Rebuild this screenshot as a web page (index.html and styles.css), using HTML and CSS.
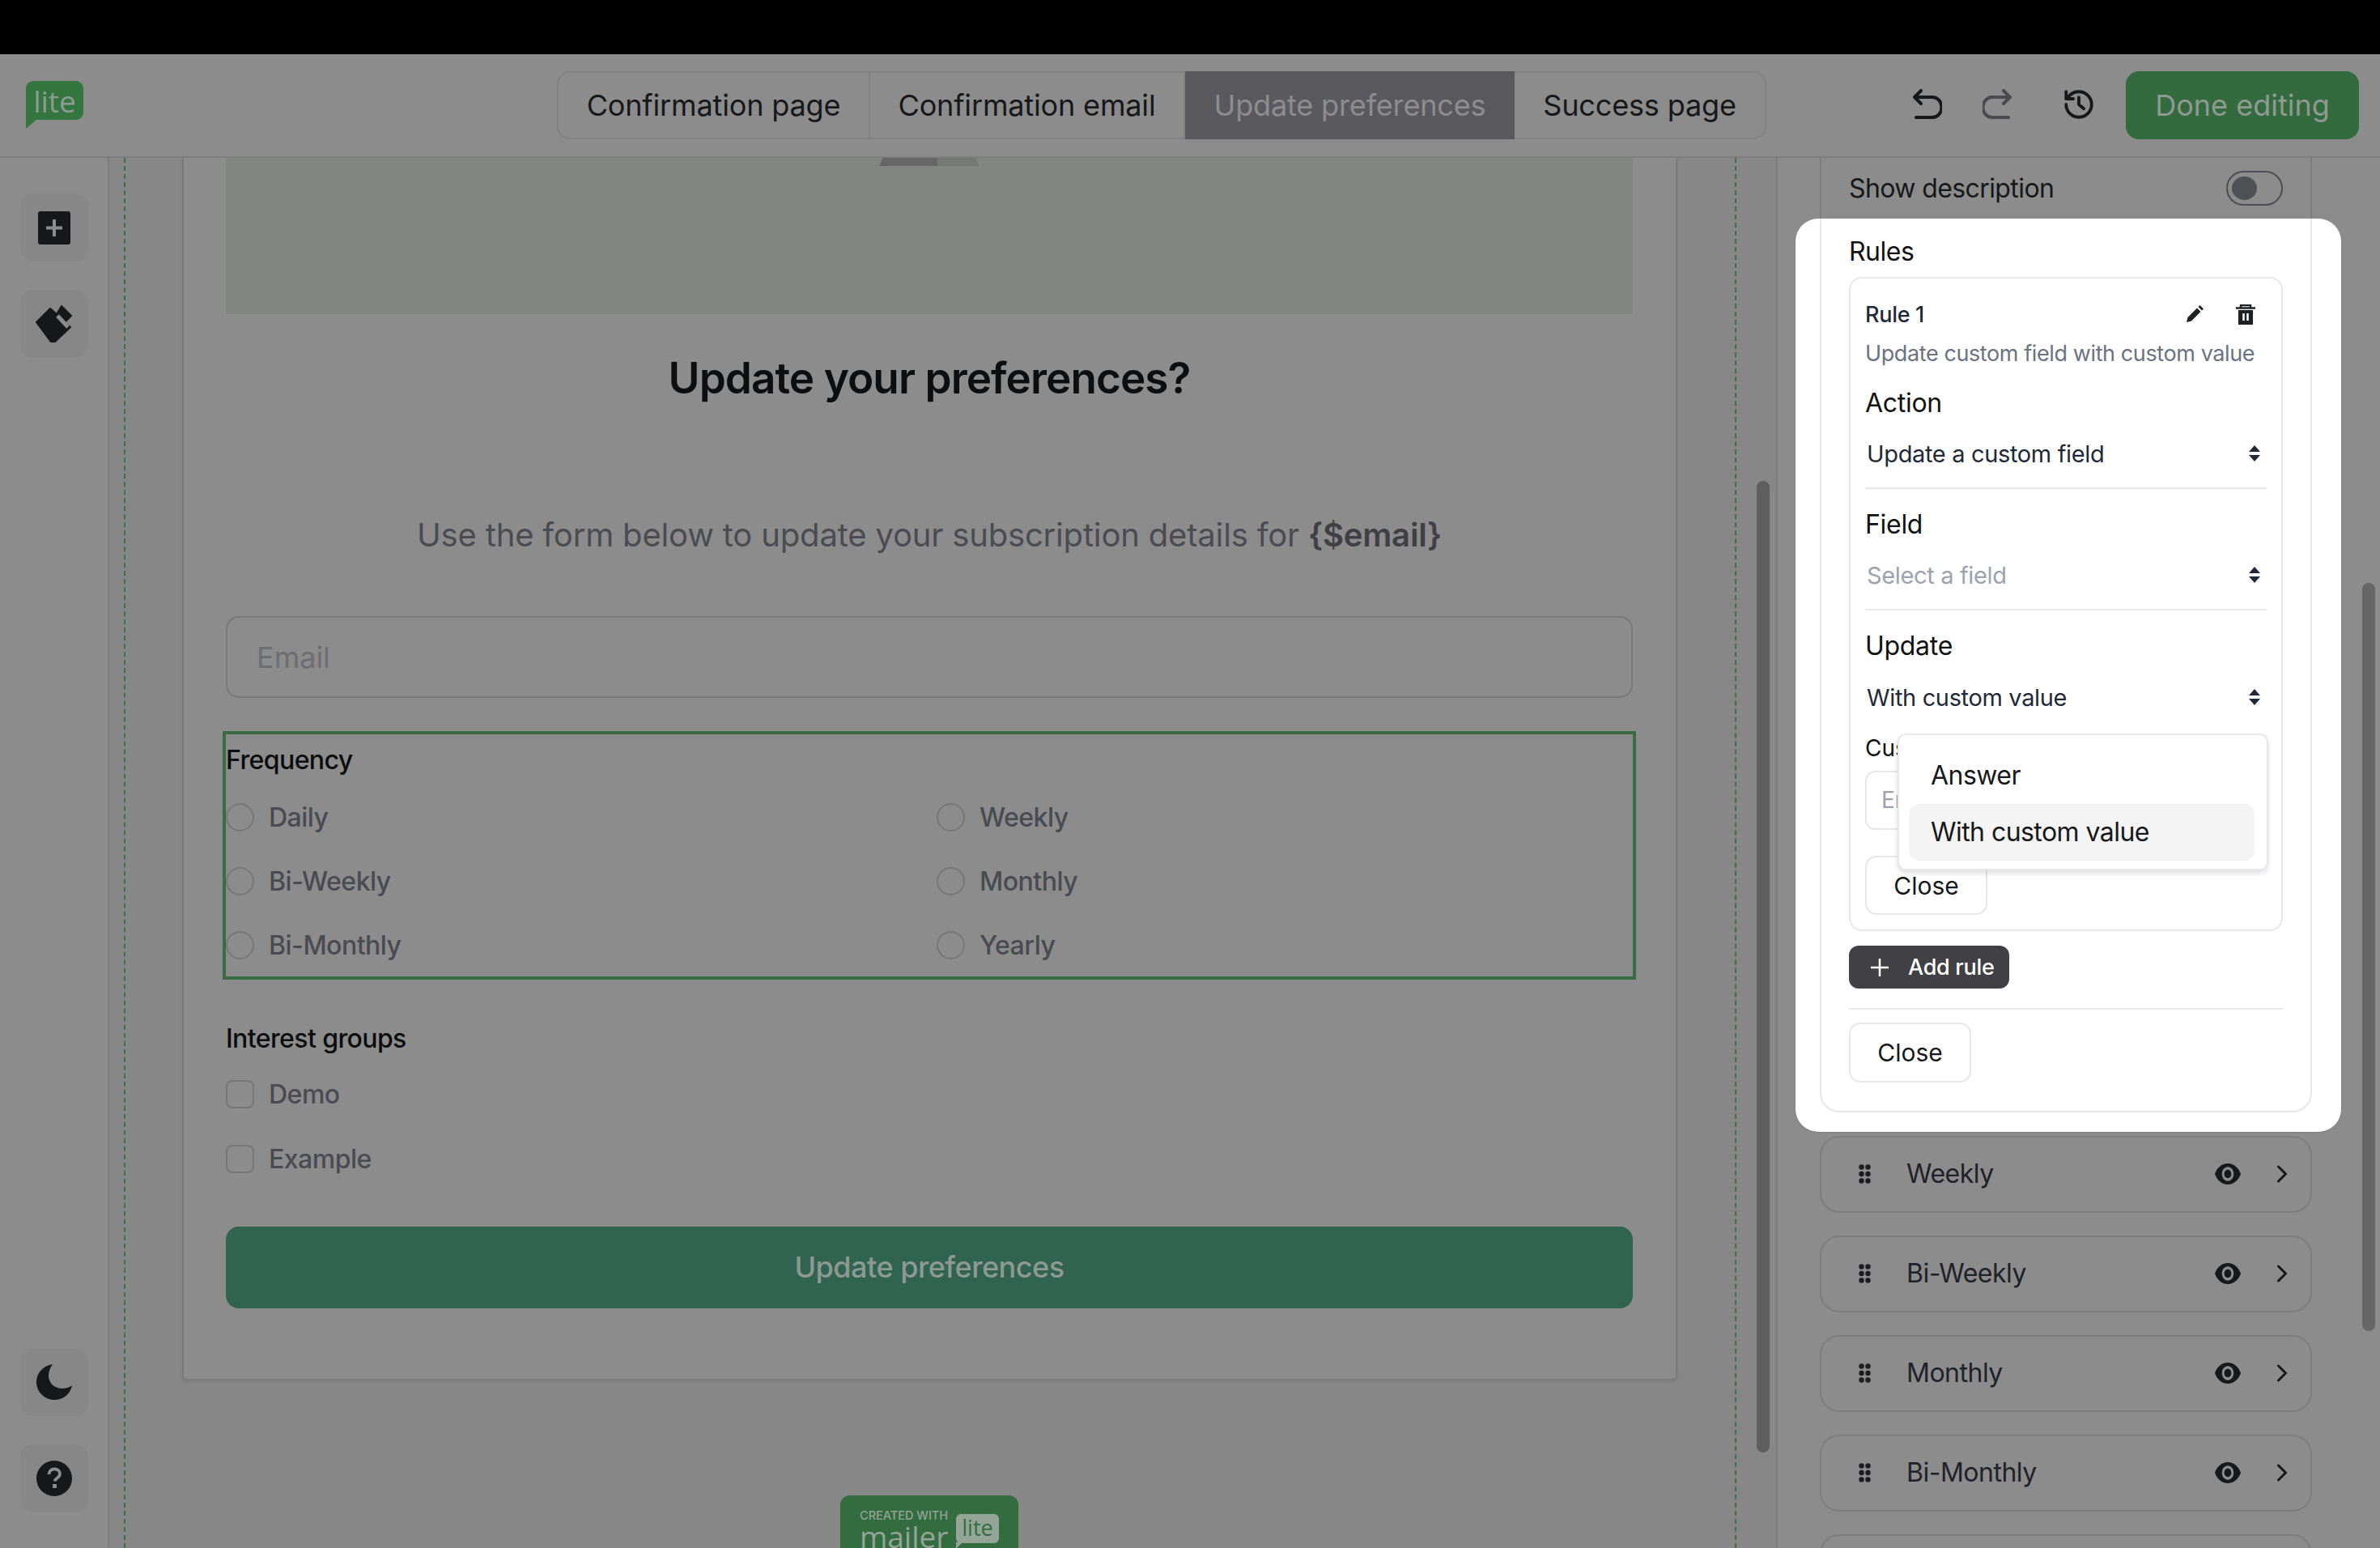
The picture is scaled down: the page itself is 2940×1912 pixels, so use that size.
FILE: index.html
```html
<!DOCTYPE html>
<html lang="en">
<head>
<meta charset="utf-8">
<title>Update preferences</title>
<link rel="stylesheet" href="styles.css">
</head>
<body>
<svg class="defs" width="0" height="0" aria-hidden="true">
  <symbol id="arrows" viewBox="0 0 14 20"><path d="M7 0l7 8H0zM7 20l-7-8h14z"/></symbol>
  <symbol id="eye" viewBox="1 4.500 22 15" preserveAspectRatio="none"><path fill-rule="evenodd" d="M12 4.500C7 4.500 2.730 7.610 1 12c1.730 4.390 6 7.500 11 7.500s9.270-3.110 11-7.500c-1.730-4.390-6-7.500-11-7.500zM12 17c-2.760 0-5-2.240-5-5s2.240-5 5-5 5 2.240 5 5-2.240 5-5 5zm0-8c-1.660 0-3 1.340-3 3s1.340 3 3 3 3-1.340 3-3-1.340-3-3-3z"/></symbol>
  <symbol id="drag" viewBox="0 0 15 24"><circle cx="3.500" cy="3.500" r="3.200"/><circle cx="11.500" cy="3.500" r="3.200"/><circle cx="3.500" cy="12" r="3.200"/><circle cx="11.500" cy="12" r="3.200"/><circle cx="3.500" cy="20.500" r="3.200"/><circle cx="11.500" cy="20.500" r="3.200"/></symbol>
  <symbol id="chev" viewBox="0 0 14 22"><path d="M2.500 2l9 9-9 9" fill="none" stroke="currentColor" stroke-width="3" stroke-linecap="round" stroke-linejoin="round"/></symbol>
</svg>

<div class="topbar"></div>

<header class="header">
  <div class="logo">lite</div>
  <nav class="tabs">
    <div class="tab tab-1">Confirmation page</div>
    <div class="tab tab-2">Confirmation email</div>
    <div class="tab tab-3 active">Update preferences</div>
    <div class="tab tab-4">Success page</div>
  </nav>
  <div class="actions">
    <svg class="icon-undo" width="36" height="38" viewBox="0 0 36 38"><path d="M10 2L2 10l8 8M2 10h22a11.500 12.500 0 0 1 0 25H4" fill="none" stroke="#17181a" stroke-width="4" stroke-linecap="round" stroke-linejoin="round"/></svg>
    <svg class="icon-redo" width="36" height="38" viewBox="0 0 36 38"><path d="M26 2l8 8-8 8M34 10H12a11.500 12.500 0 0 0 0 25h20" fill="none" stroke="#4b4b4f" stroke-width="4" stroke-linecap="round" stroke-linejoin="round"/></svg>
    <svg class="icon-history" width="42" height="42" viewBox="0 0 24 24"><path d="M3 12a9 9 0 1 0 9-9 9.750 9.750 0 0 0-6.740 2.740L3 8M3 3v5h5M12 7v5l3.500 3" fill="none" stroke="#17181a" stroke-width="2.200" stroke-linecap="round" stroke-linejoin="round"/></svg>
    <div class="done">Done editing</div>
  </div>
</header>

<main class="main">
  <aside class="rail">
    <div class="rail-group">
      <div class="rail-btn">
        <svg width="40" height="41" viewBox="0 0 40 41"><rect width="40" height="41" rx="3" fill="#17181a"/><path d="M20 10v21M10 20.500h20" stroke="#8c8c8c" stroke-width="4"/></svg>
      </div>
      <div class="rail-btn">
        <svg width="46" height="46" viewBox="0 0 46 46"><path d="M1 21L18 4l8 7 6-10 12 12-8 8 7 6-22 21z" fill="#17181a" stroke="#17181a" stroke-width="2" stroke-linejoin="round"/><path d="M27 13l13 14" stroke="#8c8c8c" stroke-width="5"/></svg>
      </div>
    </div>
    <div class="rail-group">
      <div class="rail-btn">
        <svg width="44" height="44" viewBox="0 0 44 44"><path d="M20 0C8 2 0 11 0 22c0 12 10 22 22 22 11 0 20-7 22-18-4 3-8 4-12 4-10 0-17-7-17-16 0-5 2-10 5-14z" fill="#17181a"/></svg>
      </div>
      <div class="rail-btn">
        <svg width="44" height="44" viewBox="0 0 44 44"><circle cx="22" cy="22" r="22" fill="#17181a"/><path d="M15.500 17c0-4 3-6.500 6.800-6.500 3.800 0 6.700 2.300 6.700 5.800 0 3.100-1.900 4.300-3.700 5.500-1.500 1-2.300 1.900-2.300 3.700" fill="none" stroke="#8c8c8c" stroke-width="3.800"/><rect x="20" y="29" width="5" height="5" fill="#8c8c8c"/></svg>
      </div>
    </div>
  </aside>

  <section class="canvas">
    <div class="canvas-inner">
      <article class="form-card">
        <div class="hero"><div class="hero-mark"></div></div>
        <h1 class="title">Update your preferences?</h1>
        <p class="subtitle">Use the form below to update your subscription details for <b>{$email}</b></p>
        <div class="email">Email</div>
        <div class="frame">
          <div class="group-title">Frequency</div>
          <div class="options">
            <div class="option"><span class="radio"></span>Daily</div>
            <div class="option"><span class="radio"></span>Weekly</div>
            <div class="option"><span class="radio"></span>Bi-Weekly</div>
            <div class="option"><span class="radio"></span>Monthly</div>
            <div class="option"><span class="radio"></span>Bi-Monthly</div>
            <div class="option"><span class="radio"></span>Yearly</div>
          </div>
        </div>
        <div class="group-title interest">Interest groups</div>
        <div class="checks">
          <div class="option"><span class="check"></span>Demo</div>
          <div class="option"><span class="check"></span>Example</div>
        </div>
        <div class="submit">Update preferences</div>
      </article>
      <div class="badge">
        <div class="badge-text"><span class="badge-small">CREATED WITH</span><span class="badge-big">mailer</span></div>
        <div class="badge-lite">lite</div>
      </div>
    </div>
    <div class="scroll scroll-canvas"></div>
  </section>

  <aside class="panel">
    <div class="expanded">
      <div class="show-row">
        <span>Show description</span>
        <span class="toggle"><span class="knob"></span></span>
      </div>
      <div class="spot">
        <div class="spot-inner">
          <div class="rules-label">Rules</div>
          <div class="rule-card">
            <div class="rule-head">
              <span class="rule-name">Rule 1</span>
              <span class="rule-tools">
                <svg width="22" height="22" viewBox="0 0 22 22"><path d="M1 21l1.500-6L14 3.500l4.500 4.500L7 19.500z" fill="#1f2024"/><path d="M15.500 2l2-2 4.500 4.500-2 2z" fill="#1f2024"/></svg>
                <svg width="24" height="25" viewBox="0 0 24 25"><path d="M6 5V1h12v4M0 4.500h24" fill="none" stroke="#1f2024" stroke-width="2.500"/><path d="M3 7h18v18H3z" fill="#1f2024"/><path d="M9.500 11v9M14.500 11v9" stroke="#fff" stroke-width="2.500"/></svg>
              </span>
            </div>
            <div class="rule-desc">Update custom field with custom value</div>
            <div class="field-label first">Action</div>
            <div class="select"><span>Update a custom field</span><svg class="arrows" width="14" height="20"><use href="#arrows"/></svg></div>
            <div class="field-label">Field</div>
            <div class="select placeholder"><span>Select a field</span><svg class="arrows" width="14" height="20"><use href="#arrows"/></svg></div>
            <div class="field-label">Update</div>
            <div class="select open"><span>With custom value</span><svg class="arrows" width="14" height="20"><use href="#arrows"/></svg></div>
            <div class="custom-label">Custom value</div>
            <div class="custom-input">Enter value</div>
            <div class="btn btn-inner">Close</div>
            <div class="dropdown">
              <div class="dd-item">Answer</div>
              <div class="dd-item selected">With custom value</div>
            </div>
          </div>
          <div class="add-rule">
            <svg width="22" height="22" viewBox="0 0 22 22"><path d="M11 0v22M0 11h22" stroke="#fff" stroke-width="2.500"/></svg>
            <span>Add rule</span>
          </div>
          <div class="divider"></div>
          <div class="btn">Close</div>
        </div>
      </div>
    </div>
    <div class="items">
      <div class="item"><svg class="drag" width="15" height="24"><use href="#drag"/></svg><span class="item-name">Weekly</span><svg class="eye" width="32" height="26"><use href="#eye"/></svg><svg class="chev" width="14" height="22"><use href="#chev"/></svg></div>
      <div class="item"><svg class="drag" width="15" height="24"><use href="#drag"/></svg><span class="item-name">Bi-Weekly</span><svg class="eye" width="32" height="26"><use href="#eye"/></svg><svg class="chev" width="14" height="22"><use href="#chev"/></svg></div>
      <div class="item"><svg class="drag" width="15" height="24"><use href="#drag"/></svg><span class="item-name">Monthly</span><svg class="eye" width="32" height="26"><use href="#eye"/></svg><svg class="chev" width="14" height="22"><use href="#chev"/></svg></div>
      <div class="item"><svg class="drag" width="15" height="24"><use href="#drag"/></svg><span class="item-name">Bi-Monthly</span><svg class="eye" width="32" height="26"><use href="#eye"/></svg><svg class="chev" width="14" height="22"><use href="#chev"/></svg></div>
      <div class="item"></div>
    </div>
    <div class="scroll scroll-panel"></div>
  </aside>
</main>
</body>
</html>
```

FILE: styles.css
```css
* { box-sizing: border-box; }
html, body { margin: 0; padding: 0; }
body {
  width: 2940px;
  height: 1912px;
  overflow: hidden;
  background: #8c8c8c;
  color: #17181a;
  font-family: Inter, "Liberation Sans", sans-serif;
}
.defs { position: absolute; }

.topbar { height: 67px; background: #000; }

.header {
  height: 128px;
  display: flex;
  align-items: flex-start;
  padding: 21px 26px 0 32px;
  border-bottom: 2px solid #7e7e7e;
  background: #8c8c8c;
}
.logo {
  position: relative;
  flex: none;
  width: 71px;
  height: 48px;
  margin-top: 12px;
  border-radius: 9px 9px 9px 0;
  background: #33763f;
  color: #8f9a91;
  font: 400 37px/50px "Open Sans", sans-serif;
  text-align: center;
}
.logo::after {
  content: "";
  position: absolute;
  left: 0;
  top: 47px;
  width: 14px;
  height: 12px;
  background: #33763f;
  clip-path: polygon(0 0, 100% 0, 0 100%);
}
.tabs {
  display: flex;
  flex: none;
  margin-left: 585px;
  height: 84px;
  border: 2px solid #818181;
  border-radius: 16px;
}
.tab {
  display: flex;
  flex: none;
  align-items: center;
  justify-content: center;
  font-size: 36px;
  font-weight: 400;
  letter-spacing: -.15px;
  color: #17181a;
  border-right: 2px solid #818181;
}
.tab-1 { width: 385px; }
.tab-2 { width: 389px; }
.tab-3 { width: 407px; }
.tab-4 { width: 309px; border-right: 0; }
.active {
  margin: -2px 0;
  height: 84px;
  background: #5a5a5e;
  color: #8d8d90;
  border-right: 0;
}
.actions {
  display: flex;
  flex: none;
  align-items: flex-start;
  margin-left: 181px;
}
.icon-undo { margin-top: 22px; }
.icon-redo { margin: 22px 0 0 50px; }
.icon-history { margin: 20px 0 0 62px; }
.done {
  width: 288px;
  height: 84px;
  margin-left: 37px;
  border-radius: 16px;
  background: #336b3f;
  color: #8f9a91;
  font-size: 36px;
  line-height: 84px;
  text-align: center;
}

.main { display: flex; height: 1717px; overflow: hidden; }

.rail {
  width: 135px;
  flex: none;
  display: flex;
  flex-direction: column;
  justify-content: space-between;
  padding: 44px 0 44px 25px;
  background: #8c8c8c;
  border-right: 2px solid #7d7d7d;
}
.rail-group { display: flex; flex-direction: column; gap: 35px; }
.rail-btn {
  width: 84px;
  height: 84px;
  display: flex;
  align-items: center;
  justify-content: center;
  border-radius: 16px;
  background: #878787;
}

.canvas {
  position: relative;
  flex: none;
  width: 2059px;
  padding-left: 18px;
  background: #878787;
  overflow: hidden;
}
.canvas-inner {
  width: 1992px;
  height: 1717px;
  padding: 0 71px 0 70px;
  border-left: 2px dashed #3d7049;
  border-right: 2px dashed #3d7049;
}
.form-card {
  width: 1847px;
  height: 1510px;
  padding: 0 53px 0 52px;
  background: #8c8c8c;
  border: 2px solid #7b7b7b;
  border-top: 0;
  border-radius: 0 0 6px 6px;
  box-shadow: 0 2px 3px rgba(0, 0, 0, .08);
}
.hero {
  height: 193px;
  background: #838583;
  display: flex;
  justify-content: center;
}
.hero-mark {
  width: 123px;
  height: 10px;
  background: linear-gradient(90deg, #666 0 58%, #767876 58% 100%);
  clip-path: polygon(3% 0, 97% 0, 100% 100%, 0 100%);
}
.title {
  margin: 47px 0 0;
  font-size: 53px;
  font-weight: 600;
  line-height: 64px;
  letter-spacing: -.9px;
  text-align: center;
  color: #0d0e10;
}
.subtitle {
  margin: 134px 0 0;
  font-size: 40px;
  line-height: 56px;
  letter-spacing: -.17px;
  text-align: center;
  color: #4a4c52;
}
.subtitle b { font-weight: 600; color: #3f4044; }
.email {
  height: 101px;
  margin-top: 72px;
  padding-left: 36px;
  border: 2px solid #797979;
  border-radius: 16px;
  color: #6d6e72;
  font-size: 36px;
  line-height: 99px;
}
.frame {
  margin: 41px -4px 0;
  height: 307px;
  padding: 12px 0 0;
  border: 4px solid #3a6b44;
}
.group-title {
  font-size: 32px;
  font-weight: 500;
  line-height: 40px;
  letter-spacing: -.6px;
  color: #0b0c0e;
}
.options {
  display: grid;
  grid-template-columns: 878px 1fr;
  row-gap: 39px;
  margin-top: 30px;
}
.option {
  display: flex;
  align-items: center;
  gap: 18px;
  height: 40px;
  font-size: 32px;
  font-weight: 500;
  letter-spacing: -.5px;
  color: #494b52;
}
.radio {
  width: 35px;
  height: 35px;
  border: 2px solid #777;
  border-radius: 50%;
}
.interest { margin-top: 53px; }
.checks {
  display: flex;
  flex-direction: column;
  gap: 40px;
  margin-top: 28px;
}
.check {
  width: 35px;
  height: 35px;
  border: 2px solid #777;
  border-radius: 8px;
}
.submit {
  height: 101px;
  margin-top: 64px;
  border-radius: 16px;
  background: #306350;
  color: #8c9a93;
  font-size: 36px;
  font-weight: 500;
  letter-spacing: -.5px;
  line-height: 101px;
  text-align: center;
}
.badge {
  display: flex;
  gap: 8px;
  width: 220px;
  height: 90px;
  margin: 142px 0 0 813px;
  padding: 17px 24px 0;
  border-radius: 12px 12px 0 0;
  background: #336c3f;
}
.badge-text { display: flex; flex-direction: column; width: 111px; flex: none; }
.badge-small {
  font-size: 14.500px;
  font-weight: 500;
  line-height: 15px;
  color: #94a598;
  white-space: nowrap;
}
.badge-big {
  font: 400 37px/38px "Open Sans", sans-serif;
  color: #94a598;
}
.badge-lite {
  position: relative;
  flex: none;
  width: 53px;
  height: 36px;
  margin-top: 6px;
  border-radius: 6px;
  background: #94a598;
  color: #336c3f;
  font: 400 27px/34px "Open Sans", sans-serif;
  text-align: center;
}
.badge-lite::after {
  content: "";
  position: absolute;
  left: 0;
  top: 35px;
  width: 8px;
  height: 8px;
  background: #94a598;
  clip-path: polygon(0 0, 100% 0, 0 100%);
}

.scroll { position: absolute; width: 16px; border-radius: 8px; }
.scroll-canvas { left: 2035px; top: 399px; height: 1200px; background: #5f5f5f; }
.scroll-panel { left: 722px; top: 525px; height: 924px; background: #666; }

.panel {
  position: relative;
  flex: 1;
  padding: 0 0 0 52px;
  background: #8c8c8c;
  border-left: 2px solid #7d7d7d;
}
.expanded {
  width: 608px;
  padding-top: 15px;
  border-left: 2px solid #7d7d7d;
  border-right: 2px solid #7d7d7d;
  height: 1203px;
}
.show-row {
  display: flex;
  align-items: center;
  justify-content: space-between;
  height: 44px;
  padding: 0 34px 0 34px;
  font-size: 32px;
  letter-spacing: -.6px;
}
.toggle {
  width: 70px;
  height: 43px;
  padding: 5px;
  border: 2px solid #4d4e52;
  border-radius: 22px;
}
.knob {
  display: block;
  width: 31px;
  height: 29px;
  border-radius: 50%;
  background: #4f5054;
}
.spot {
  width: 674px;
  margin: 16px 0 0 -32px;
  padding: 0 36px 24px 30px;
  border-radius: 28px;
  background: #fff;
  box-shadow: 0 1px 2px rgba(0, 0, 0, .1);
  position: relative;
}
.spot-inner {
  width: 608px;
  padding: 21px 34px 35px 34px;
  border: 2px solid #e5e7eb;
  border-top: 0;
  border-radius: 0 0 24px 24px;
}
.rules-label { font-size: 32px; line-height: 40px; letter-spacing: -.5px; color: #111; }
.rule-card {
  position: relative;
  margin-top: 11px;
  height: 808px;
  padding: 27px 18px 0 18px;
  border: 2px solid #e5e7eb;
  border-radius: 16px;
}
.rule-head {
  display: flex;
  align-items: center;
  justify-content: space-between;
  height: 34px;
}
.rule-name { font-size: 27px; font-weight: 500; letter-spacing: -.3px; color: #1f2937; }
.rule-tools {
  display: flex;
  align-items: center;
  gap: 40px;
  margin-right: 14px;
}
.rule-desc {
  margin-top: 15px;
  font-size: 27px;
  line-height: 34px;
  letter-spacing: -.4px;
  color: #6b7280;
  white-space: nowrap;
}
.field-label {
  margin-top: 24px;
  font-size: 32px;
  line-height: 40px;
  letter-spacing: -.3px;
  color: #111;
}
.select {
  display: flex;
  align-items: center;
  justify-content: space-between;
  height: 81px;
  margin-top: 5px;
  padding: 0 8px 5px 2px;
  border-bottom: 2px solid #e5e7eb;
  font-size: 29px;
  letter-spacing: -.35px;
  color: #1f2937;
}
.select.open { border-bottom: 0; }
.placeholder { color: #9ca3af; }
.arrows { fill: #1f2937; }
.custom-label {
  margin-top: 3px;
  font-size: 28px;
  line-height: 34px;
  color: #111;
}
.custom-input {
  width: 400px;
  height: 73px;
  margin-top: 11px;
  padding-left: 18px;
  border: 2px solid #e5e7eb;
  border-radius: 12px;
  font-size: 28px;
  line-height: 69px;
  color: #9ca3af;
}
.btn {
  width: 151px;
  height: 74px;
  border: 2px solid #e5e7eb;
  border-radius: 14px;
  background: #fff;
  font-size: 30px;
  line-height: 70px;
  text-align: center;
  color: #17181a;
}
.btn-inner { margin-top: 32px; height: 73px; }
.dropdown {
  position: absolute;
  left: 58px;
  top: 562px;
  width: 458px;
  height: 169px;
  padding: 15px 15px 15px 12px;
  border: 2px solid #e5e7eb;
  border-radius: 10px;
  background: #fff;
  box-shadow: 0 4px 6px rgba(0, 0, 0, .12);
}
.dd-item {
  height: 70px;
  padding-left: 27px;
  border-radius: 12px;
  font-size: 32px;
  line-height: 70px;
  letter-spacing: -.55px;
  color: #17181a;
}
.selected { background: #f4f4f5; }
.add-rule {
  display: flex;
  align-items: center;
  gap: 24px;
  width: 198px;
  height: 53px;
  margin-top: 18px;
  padding-left: 27px;
  border-radius: 12px;
  background: #404045;
  color: #fff;
  font-size: 27px;
  font-weight: 500;
  letter-spacing: -.3px;
}
.divider { height: 2px; margin: 24px 0 16px; background: #e5e7eb; }

.items { display: flex; flex-direction: column; gap: 28px; width: 608px; margin-top: 5px; }
.item {
  flex: none;
  display: flex;
  align-items: center;
  height: 95px;
  padding: 0 28px 2px 46px;
  border: 2px solid #7d7d7d;
  border-radius: 24px;
  color: #1f2229;
  font-size: 32px;
  letter-spacing: -.5px;
}
.drag { fill: #1c1d20; margin-right: 44px; }
.item-name { flex: 1; }
.eye { fill: #17181a; margin-right: 44px; }
.chev { color: #17181a; }
```
